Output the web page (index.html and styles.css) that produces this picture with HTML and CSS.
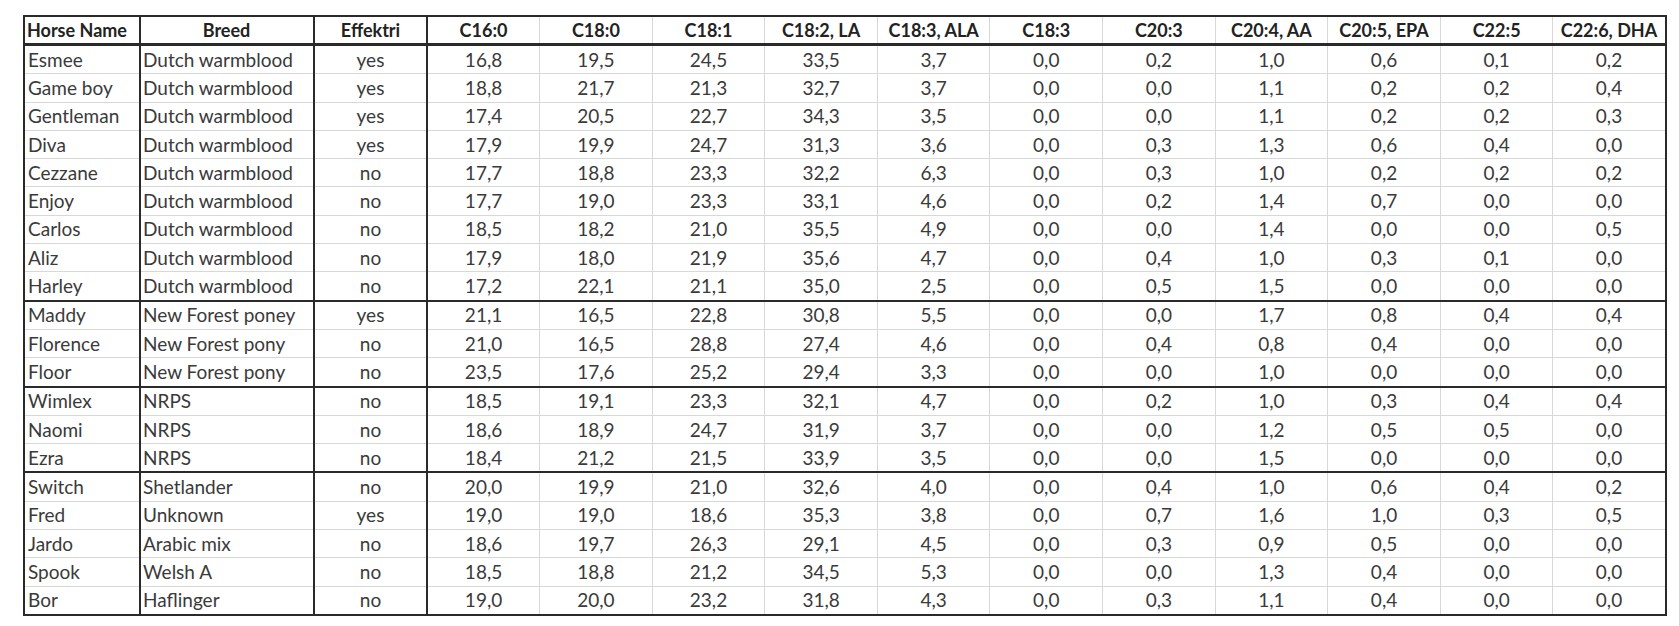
FILE: index.html
```html
<!DOCTYPE html>
<html>
<head>
<meta charset="utf-8">
<link rel="stylesheet" href="styles.css">
</head>
<body>
<table class="fa">
<colgroup>
<col class="c-name"><col class="c-breed"><col class="c-eff">
<col class="c-num"><col class="c-num"><col class="c-num"><col class="c-num"><col class="c-num"><col class="c-num"><col class="c-num"><col class="c-num"><col class="c-num"><col class="c-num"><col class="c-num">
</colgroup>
<thead>
<tr>
<th class="name">Horse Name</th><th class="breed">Breed</th><th class="eff">Effektri</th>
<th>C16:0</th><th>C18:0</th><th>C18:1</th><th>C18:2, LA</th><th>C18:3, ALA</th><th>C18:3</th><th>C20:3</th><th>C20:4, AA</th><th>C20:5, EPA</th><th>C22:5</th><th>C22:6, DHA</th>
</tr>
</thead>
<tbody>
<tr><td class="name">Esmee</td><td class="breed">Dutch warmblood</td><td class="eff">yes</td><td>16,8</td><td>19,5</td><td>24,5</td><td>33,5</td><td>3,7</td><td>0,0</td><td>0,2</td><td>1,0</td><td>0,6</td><td>0,1</td><td>0,2</td></tr>
<tr><td class="name">Game boy</td><td class="breed">Dutch warmblood</td><td class="eff">yes</td><td>18,8</td><td>21,7</td><td>21,3</td><td>32,7</td><td>3,7</td><td>0,0</td><td>0,0</td><td>1,1</td><td>0,2</td><td>0,2</td><td>0,4</td></tr>
<tr><td class="name">Gentleman</td><td class="breed">Dutch warmblood</td><td class="eff">yes</td><td>17,4</td><td>20,5</td><td>22,7</td><td>34,3</td><td>3,5</td><td>0,0</td><td>0,0</td><td>1,1</td><td>0,2</td><td>0,2</td><td>0,3</td></tr>
<tr><td class="name">Diva</td><td class="breed">Dutch warmblood</td><td class="eff">yes</td><td>17,9</td><td>19,9</td><td>24,7</td><td>31,3</td><td>3,6</td><td>0,0</td><td>0,3</td><td>1,3</td><td>0,6</td><td>0,4</td><td>0,0</td></tr>
<tr><td class="name">Cezzane</td><td class="breed">Dutch warmblood</td><td class="eff">no</td><td>17,7</td><td>18,8</td><td>23,3</td><td>32,2</td><td>6,3</td><td>0,0</td><td>0,3</td><td>1,0</td><td>0,2</td><td>0,2</td><td>0,2</td></tr>
<tr><td class="name">Enjoy</td><td class="breed">Dutch warmblood</td><td class="eff">no</td><td>17,7</td><td>19,0</td><td>23,3</td><td>33,1</td><td>4,6</td><td>0,0</td><td>0,2</td><td>1,4</td><td>0,7</td><td>0,0</td><td>0,0</td></tr>
<tr><td class="name">Carlos</td><td class="breed">Dutch warmblood</td><td class="eff">no</td><td>18,5</td><td>18,2</td><td>21,0</td><td>35,5</td><td>4,9</td><td>0,0</td><td>0,0</td><td>1,4</td><td>0,0</td><td>0,0</td><td>0,5</td></tr>
<tr><td class="name">Aliz</td><td class="breed">Dutch warmblood</td><td class="eff">no</td><td>17,9</td><td>18,0</td><td>21,9</td><td>35,6</td><td>4,7</td><td>0,0</td><td>0,4</td><td>1,0</td><td>0,3</td><td>0,1</td><td>0,0</td></tr>
<tr class="grp-end"><td class="name">Harley</td><td class="breed">Dutch warmblood</td><td class="eff">no</td><td>17,2</td><td>22,1</td><td>21,1</td><td>35,0</td><td>2,5</td><td>0,0</td><td>0,5</td><td>1,5</td><td>0,0</td><td>0,0</td><td>0,0</td></tr>
<tr><td class="name">Maddy</td><td class="breed">New Forest poney</td><td class="eff">yes</td><td>21,1</td><td>16,5</td><td>22,8</td><td>30,8</td><td>5,5</td><td>0,0</td><td>0,0</td><td>1,7</td><td>0,8</td><td>0,4</td><td>0,4</td></tr>
<tr><td class="name">Florence</td><td class="breed">New Forest pony</td><td class="eff">no</td><td>21,0</td><td>16,5</td><td>28,8</td><td>27,4</td><td>4,6</td><td>0,0</td><td>0,4</td><td>0,8</td><td>0,4</td><td>0,0</td><td>0,0</td></tr>
<tr class="grp-end"><td class="name">Floor</td><td class="breed">New Forest pony</td><td class="eff">no</td><td>23,5</td><td>17,6</td><td>25,2</td><td>29,4</td><td>3,3</td><td>0,0</td><td>0,0</td><td>1,0</td><td>0,0</td><td>0,0</td><td>0,0</td></tr>
<tr><td class="name">Wimlex</td><td class="breed">NRPS</td><td class="eff">no</td><td>18,5</td><td>19,1</td><td>23,3</td><td>32,1</td><td>4,7</td><td>0,0</td><td>0,2</td><td>1,0</td><td>0,3</td><td>0,4</td><td>0,4</td></tr>
<tr><td class="name">Naomi</td><td class="breed">NRPS</td><td class="eff">no</td><td>18,6</td><td>18,9</td><td>24,7</td><td>31,9</td><td>3,7</td><td>0,0</td><td>0,0</td><td>1,2</td><td>0,5</td><td>0,5</td><td>0,0</td></tr>
<tr class="grp-end"><td class="name">Ezra</td><td class="breed">NRPS</td><td class="eff">no</td><td>18,4</td><td>21,2</td><td>21,5</td><td>33,9</td><td>3,5</td><td>0,0</td><td>0,0</td><td>1,5</td><td>0,0</td><td>0,0</td><td>0,0</td></tr>
<tr><td class="name">Switch</td><td class="breed">Shetlander</td><td class="eff">no</td><td>20,0</td><td>19,9</td><td>21,0</td><td>32,6</td><td>4,0</td><td>0,0</td><td>0,4</td><td>1,0</td><td>0,6</td><td>0,4</td><td>0,2</td></tr>
<tr><td class="name">Fred</td><td class="breed">Unknown</td><td class="eff">yes</td><td>19,0</td><td>19,0</td><td>18,6</td><td>35,3</td><td>3,8</td><td>0,0</td><td>0,7</td><td>1,6</td><td>1,0</td><td>0,3</td><td>0,5</td></tr>
<tr><td class="name">Jardo</td><td class="breed">Arabic mix</td><td class="eff">no</td><td>18,6</td><td>19,7</td><td>26,3</td><td>29,1</td><td>4,5</td><td>0,0</td><td>0,3</td><td>0,9</td><td>0,5</td><td>0,0</td><td>0,0</td></tr>
<tr><td class="name">Spook</td><td class="breed">Welsh A</td><td class="eff">no</td><td>18,5</td><td>18,8</td><td>21,2</td><td>34,5</td><td>5,3</td><td>0,0</td><td>0,0</td><td>1,3</td><td>0,4</td><td>0,0</td><td>0,0</td></tr>
<tr><td class="name">Bor</td><td class="breed">Haflinger</td><td class="eff">no</td><td>19,0</td><td>20,0</td><td>23,2</td><td>31,8</td><td>4,3</td><td>0,0</td><td>0,3</td><td>1,1</td><td>0,4</td><td>0,0</td><td>0,0</td></tr>
</tbody>
</table>
</body>
</html>
```
FILE: styles.css
```css
html, body {
  margin: 0;
  padding: 0;
  background: #ffffff;
}
body {
  padding: 15px 0 0 23px;
  font-family: Lato, "Open Sans", sans-serif;
  color: #3a3a3a;
}
.fa {
  border-collapse: collapse;
  table-layout: fixed;
  width: 1642px;
  border: 2px solid #2a2a2a;
  font-size: 19px;
}
.c-name { width: 116px; }
.c-breed { width: 174px; }
.c-eff { width: 113px; }
.c-num { width: 112.6px; }

.fa th, .fa td {
  padding: 0 3px;
  white-space: nowrap;
  overflow: hidden;
  text-align: center;
  border: 1px solid #d8d8d8;
  line-height: 20px;
}
.fa th {
  height: 26px;
  font-size: 18px;
  font-weight: 700;
  color: #222222;
  border-bottom: 3px solid #2a2a2a;
}
.fa td {
  height: 27.3px;
}
.fa .name {
  text-align: left;
  border-right: 2px solid #2a2a2a;
}
.fa th.name { padding-left: 2px; }
.fa .breed {
  text-align: left;
  border-right: 2px solid #2a2a2a;
  padding-left: 2px;
}
.fa th.breed { text-align: center; }
.fa .eff {
  border-right: 2px solid #2a2a2a;
}
.fa tr.grp-end td {
  border-bottom: 2px solid #2a2a2a;
}
```
